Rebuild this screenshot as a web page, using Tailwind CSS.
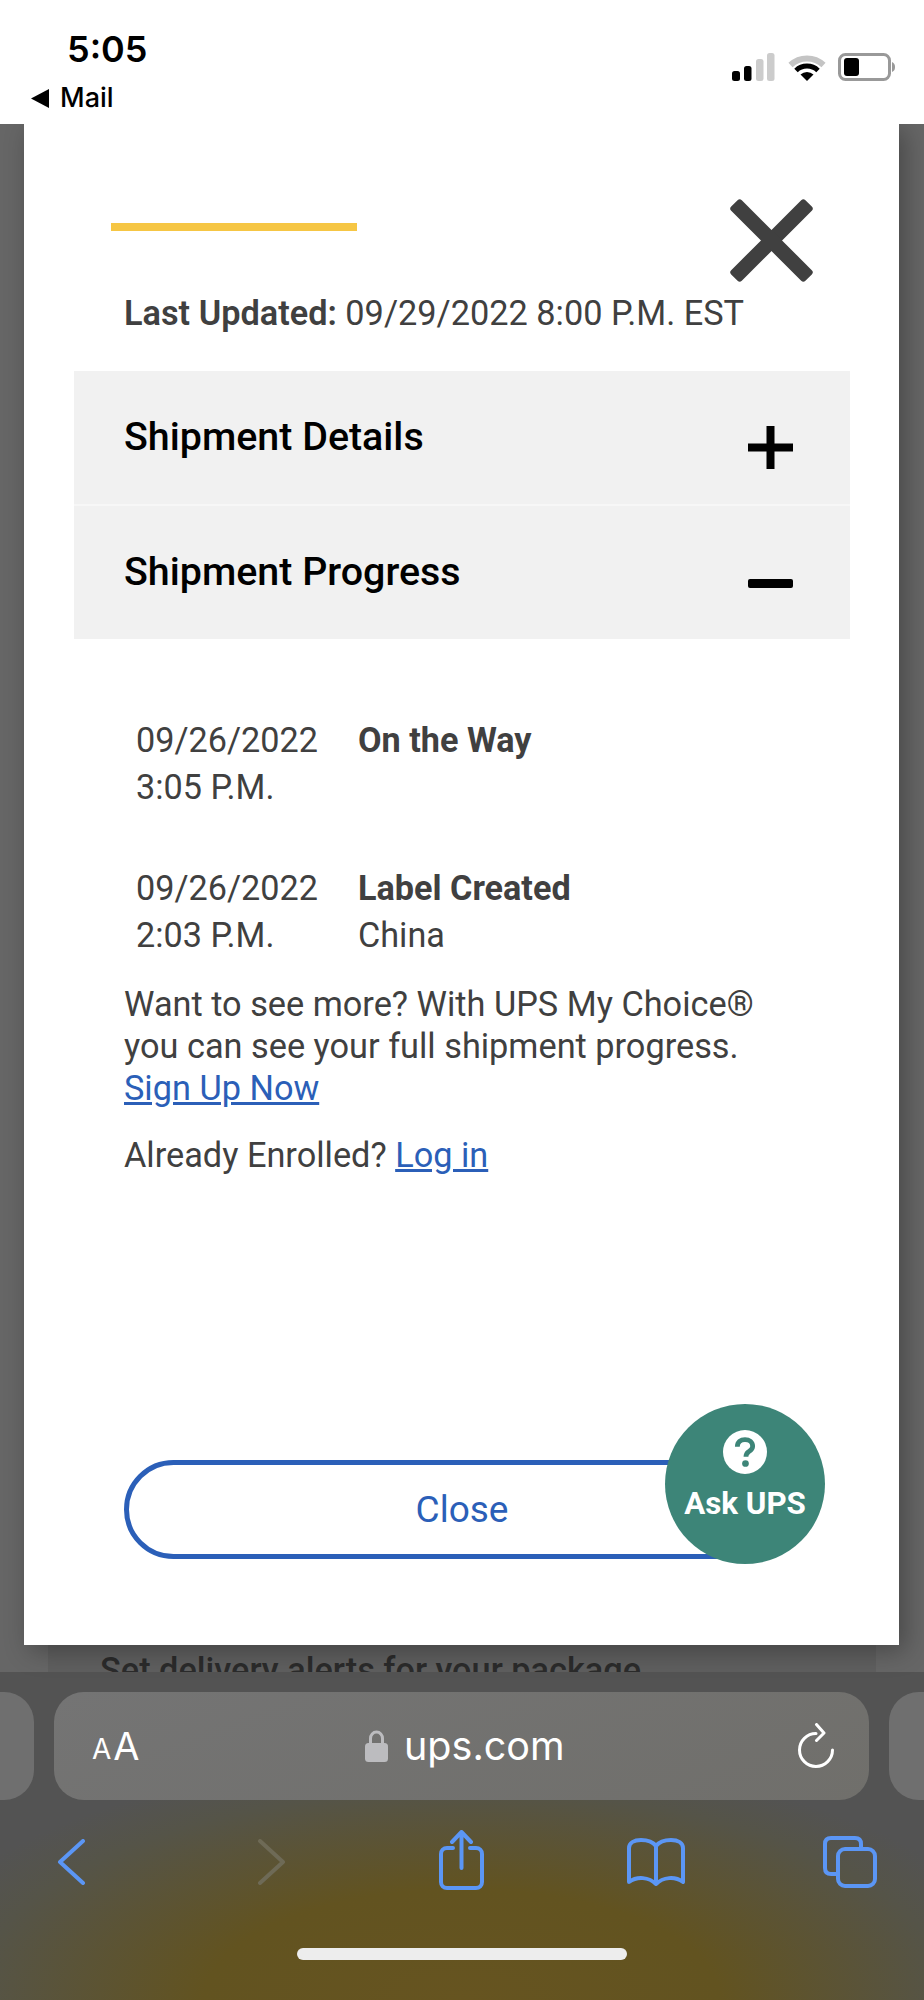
<!DOCTYPE html>
<html lang="en">
<head>
    <meta charset="UTF-8">
    <meta name="viewport" content="width=device-width, initial-scale=1.0">
    <title>UPS Tracking</title>
    <script src="https://cdn.jsdelivr.net/npm/@tailwindcss/browser@4"></script>
</head>
<body class="bg-white font-['Roboto',sans-serif]">
<div class="w-[924px] h-[2000px] flex flex-col overflow-hidden">

    <!-- status bar -->
    <div class="relative z-10 h-[124px] shrink-0 bg-white flex justify-between text-black font-['Inter',sans-serif]">
        <div class="pl-[31px] pt-[28px]">
            <div class="pl-[36px] text-[36px] leading-[42px] font-semibold">5:05</div>
            <div class="flex items-center mt-[15px] h-[26px]">
                <svg class="w-[18px] h-[19px]" viewBox="0 0 18 19"><path d="M18 0V19L0 9.5Z" fill="#000"/></svg>
                <span class="ml-[11px] text-[27px] leading-[26px] font-medium">Mail</span>
            </div>
        </div>
        <div class="flex pt-[53px] pr-[28px] h-[81px]">
            <svg class="w-[43px] h-[28px]" viewBox="0 0 43 28">
                <rect x="0" y="18" width="8" height="10" rx="2.5" fill="#000"/>
                <rect x="12" y="13" width="7.5" height="15" rx="2.5" fill="#000"/>
                <rect x="24" y="6" width="7.5" height="22" rx="2.5" fill="#ccc"/>
                <rect x="35" y="0" width="7.5" height="28" rx="2.5" fill="#ccc"/>
            </svg>
            <svg class="ml-[13px] w-[38px] h-[28px]" viewBox="0 0 38 28">
                <path d="M2.5 12A24 24 0 0 1 35.5 12" fill="none" stroke="#c4c4c4" stroke-width="6"/>
                <path d="M8 17.5A16 16 0 0 1 30 17.5" fill="none" stroke="#000" stroke-width="5"/>
                <path d="M19 28L12.500 21.500A9.500 9.500 0 0 1 25.500 21.500Z" fill="#000"/>
            </svg>
            <svg class="ml-[12px] w-[58px] h-[28px]" viewBox="0 0 58 28">
                <rect x="1.500" y="1.500" width="50" height="25" rx="6" fill="#fff" stroke="#999" stroke-width="3"/>
                <rect x="6" y="5" width="15" height="18" rx="3" fill="#000"/>
                <path d="M54 9C56.500 10 57 12 57 14S56.500 18 54 19Z" fill="#999"/>
            </svg>
        </div>
    </div>

    <!-- page behind the modal -->
    <div class="relative flex-1 bg-[#666666] flex flex-col justify-end">
        <div class="mx-[48px] h-[29px] bg-[#5f5f5f] overflow-hidden pl-[52px]">
            <div class="text-[34.3px] leading-[40px] mt-[7px] text-[#2b2b2b] whitespace-nowrap font-medium">Set delivery alerts for your package</div>
        </div>

        <!-- modal -->
        <div class="absolute left-[24px] top-0 w-[875px] h-[1521px] bg-white shadow-[6px_6px_24px_rgba(0,0,0,0.3)] text-[#404040]">
            <div class="flex justify-between pt-[77px] pl-[87px] pr-[88px] h-[156px]">
                <div class="w-[246px] h-[8px] mt-[22px] bg-[#f6c644]"></div>
                <svg class="w-[79px] h-[79px] overflow-visible" viewBox="0 0 79 79">
                    <rect x="32" y="-13" width="15" height="105" rx="3" fill="#404040" transform="rotate(45 39.5 39.5)"/>
                    <rect x="32" y="-13" width="15" height="105" rx="3" fill="#404040" transform="rotate(-45 39.5 39.5)"/>
                </svg>
            </div>
            <p class="mt-[10px] pl-[100px] text-[34.3px] leading-[47px]"><span class="font-semibold">Last Updated:</span> 09/29/2022 8:00 P.M. EST</p>

            <div class="mt-[34px] ml-[50px] mr-[49px] flex flex-col gap-[2px] bg-[#f7f7f7] text-black">
                <div class="h-[133px] bg-[#f1f1f1] flex justify-between pl-[50px] pr-[57px]">
                    <span class="mt-[41px] text-[39.4px] leading-[50px] font-medium">Shipment Details</span>
                    <svg class="mt-[55px] w-[45px] h-[43px]" viewBox="0 0 45 43">
                        <path d="M0 21.500H45M22.500 0V43" fill="none" stroke="#000" stroke-width="8"/>
                    </svg>
                </div>
                <div class="h-[133px] bg-[#f1f1f1] flex justify-between pl-[50px] pr-[57px]">
                    <span class="mt-[41px] text-[39.4px] leading-[50px] font-medium">Shipment Progress</span>
                    <div class="mt-[73px] w-[45px] h-[9px] bg-black rounded-[2px]"></div>
                </div>
            </div>

            <div class="mt-[78px] pl-[112px] grid grid-cols-[222px_1fr] gap-y-[54px] text-[34.2px] leading-[47px]">
                <div>09/26/2022<br>3:05 P.M.</div>
                <div><span class="font-bold">On the Way</span></div>
                <div>09/26/2022<br>2:03 P.M.</div>
                <div><span class="font-bold">Label Created</span><br>China</div>
            </div>

            <p class="mt-[24px] pl-[100px] text-[34.3px] leading-[42px]">Want to see more? With UPS My Choice®<br>you can see your full shipment progress.<br><a href="#" class="text-[#2b5fb8] underline">Sign Up Now</a></p>
            <p class="mt-[25px] pl-[100px] text-[34.3px] leading-[42px]">Already Enrolled? <a href="#" class="text-[#2b5fb8] underline">Log in</a></p>

            <button class="block mt-[284px] ml-[100px] w-[676px] h-[99px] rounded-full border-[5px] border-[#2b5fb8] text-[#2b5fb8] text-[37px]">Close</button>

            <!-- ask ups bubble -->
            <div class="absolute left-[641px] top-[1280px] w-[160px] h-[160px] rounded-full bg-[#3d8578] flex flex-col items-center pt-[26px] text-white">
                <svg class="w-[44px] h-[44px]" viewBox="0 0 46 46">
                    <circle cx="23" cy="23" r="23" fill="#fff"/>
                    <path d="M15 17.500C15 12.500 18.500 10 23 10S31 12.500 31 17C31 20.500 28.500 21.500 26.500 23S24 25.500 24 28" fill="none" stroke="#3d8578" stroke-width="5"/>
                    <circle cx="23.500" cy="35" r="3.500" fill="#3d8578"/>
                </svg>
                <span class="mt-[12px] text-[31.3px] leading-[36px] font-bold whitespace-nowrap">Ask UPS</span>
            </div>
        </div>
    </div>

    <!-- safari toolbar -->
    <div class="h-[328px] shrink-0 bg-[radial-gradient(ellipse_62%_75%_at_50%_100%,#665420_0%,#625320_45%,#555448_85%,#535353_100%)] font-['Inter',sans-serif]">
        <div class="flex h-[108px] mt-[20px] gap-[20px] -ml-[20px] w-[1000px]">
            <div class="w-[54px] rounded-r-[30px] bg-[#6f6f6f]"></div>
            <div class="w-[815px] rounded-[30px] bg-[linear-gradient(160deg,#747474,#706f6b)] flex items-center text-white relative">
                <div class="ml-[38px] flex items-end h-[34px] font-normal">
                    <span class="text-[28px] leading-[27px]">A</span><span class="ml-[2px] text-[38px] leading-[34px]">A</span>
                </div>
                <div class="flex items-center absolute left-[311px]">
                    <svg class="w-[23px] h-[32px]" viewBox="0 0 23 32">
                        <path d="M5.500 14V8.500C5.500 5 8 2 11.500 2S17.500 5 17.500 8.500V14" fill="none" stroke="#bcbcbf" stroke-width="3"/>
                        <rect x="0" y="13" width="23" height="19" rx="3.500" fill="#bcbcbf"/>
                    </svg>
                    <span class="ml-[16px] text-[39.5px] leading-[44px]">ups.com</span>
                </div>
                <svg class="absolute left-[743px] top-[31px] w-[38px] h-[46px]" viewBox="0 0 38 46">
                    <path d="M19 10.500A16.500 16.500 0 1 0 35.500 27" fill="none" stroke="#fff" stroke-width="3" stroke-linecap="round"/>
                    <path d="M19.500 1.500L27 10L19.500 17.500" fill="none" stroke="#fff" stroke-width="3" stroke-linecap="round" stroke-linejoin="round"/>
                </svg>
            </div>
            <div class="w-[60px] rounded-l-[30px] bg-[#6f6f6f]"></div>
        </div>

        <div class="flex h-[60px] mt-[30px] items-center pl-[57px]">
            <svg class="mt-[4px] w-[30px] h-[46px]" viewBox="0 0 30 46">
                <path d="M26 2L3 23L26 44" fill="none" stroke="#5b96f5" stroke-width="4" stroke-linecap="round" stroke-linejoin="round"/>
            </svg>
            <svg class="mt-[4px] ml-[170px] w-[30px] h-[46px]" viewBox="0 0 30 46">
                <path d="M3 2L26 23L3 44" fill="none" stroke="#6e6a56" stroke-width="4" stroke-linecap="round" stroke-linejoin="round"/>
            </svg>
            <svg class="ml-[152px] w-[45px] h-[60px]" viewBox="0 0 45 60">
                <path d="M14 18H8C4.500 18 2 20.500 2 24V52C2 55.500 4.500 58 8 58H37C40.500 58 43 55.500 43 52V24C43 20.500 40.500 18 37 18H31" fill="none" stroke="#5b96f5" stroke-width="4" stroke-linecap="round"/>
                <path d="M22.500 38V3M13 12L22.500 2L32 12" fill="none" stroke="#5b96f5" stroke-width="4" stroke-linecap="round" stroke-linejoin="round"/>
            </svg>
            <svg class="mt-[4px] ml-[143px] w-[58px] h-[48px]" viewBox="0 0 58 48">
                <path d="M29 8C26 4 20 2 14 2C7 2 2 5 2 10V44C10 38 22 39 29 46C36 39 48 38 56 44V10C56 5 51 2 44 2C38 2 32 4 29 8V46" fill="none" stroke="#5b96f5" stroke-width="4" stroke-linecap="round" stroke-linejoin="round"/>
            </svg>
            <svg class="mt-[4px] ml-[138px] w-[54px] h-[52px]" viewBox="0 0 54 52">
                <path d="M38 13V8C38 4 36 2 32 2H8C4 2 2 4 2 8V32C2 36 4 38 8 38H15" fill="none" stroke="#5b96f5" stroke-width="4" stroke-linecap="round"/>
                <rect x="15" y="13" width="37" height="37" rx="7" fill="none" stroke="#5b96f5" stroke-width="4"/>
            </svg>
        </div>

        <div class="mt-[58px] mx-auto w-[330px] h-[12px] rounded-full bg-[#ededed]"></div>
    </div>
</div>
</body>
</html>
